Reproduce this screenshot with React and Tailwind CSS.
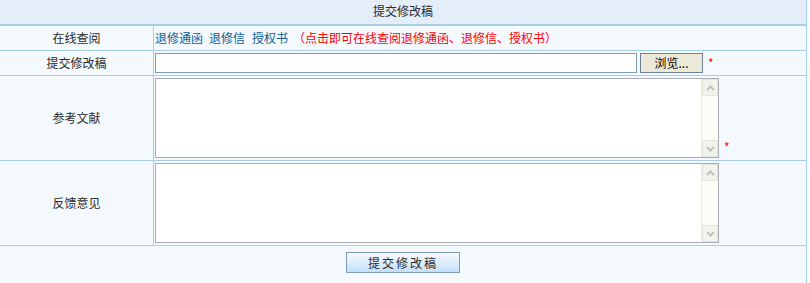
import React from "react";

function FakeTextarea() {
  return (
    <div className="flex w-[564px] h-[80px] border border-[#a9adb3] bg-white">
      <textarea className="flex-1 resize-none outline-none border-0 bg-white" />
      <div className="flex flex-col w-[17px] bg-[#fcfcf8] border-l border-[#f0efe8]">
        <div className="flex items-center justify-center h-[17px] bg-[#f3f2ec] border border-[#e6e4dc]">
          <svg width="9" height="6" viewBox="0 0 9 6">
            <path d="M1 5 L4.5 1.5 L8 5" fill="none" stroke="#c2c2bd" strokeWidth="2" />
          </svg>
        </div>
        <div className="flex-1" />
        <div className="flex items-center justify-center h-[17px] bg-[#f3f2ec] border border-[#e6e4dc]">
          <svg width="9" height="6" viewBox="0 0 9 6">
            <path d="M1 1 L4.5 4.5 L8 1" fill="none" stroke="#c2c2bd" strokeWidth="2" />
          </svg>
        </div>
      </div>
    </div>
  );
}

function Row({ label, height, children, alignEnd }) {
  return (
    <div className={"flex border-b border-[#a8cde6] " + height}>
      <div className="flex w-[154px] shrink-0 items-center justify-center border-r border-[#a8cde6] text-[#2b2b2b]">
        {label}
      </div>
      <div className={"flex flex-1 pl-[1px] " + (alignEnd ? "items-start pt-[2px]" : "items-center")}>
        {children}
      </div>
    </div>
  );
}

export default function App() {
  return (
    <div className="w-[810px] h-[283px] bg-white font-['Noto_Sans_CJK_SC',sans-serif] text-[12px] leading-[16px]">
      <div className="w-[807px] border-r border-[#a8cde6] bg-[#f4f9fe] h-[283px]">
        <div className="flex h-[26px] items-center justify-center bg-[#e3eef9] border-b-2 border-[#a8cde6] text-[#2b2b2b] pb-[2px]">
          提交修改稿
        </div>
        <Row label="在线查阅" height="h-[25px]">
          <a className="text-[#0f5c94] mr-[6px]" href="#">退修通函</a>
          <a className="text-[#0f5c94] mr-[7px]" href="#">退修信</a>
          <a className="text-[#0f5c94] mr-[5px]" href="#">授权书</a>
          <span className="text-[#ff0000]">（点击即可在线查阅退修通函、退修信、授权书）</span>
        </Row>
        <Row label="提交修改稿" height="h-[25px]">
          <input type="text" className="w-[482px] h-[20px] border border-[#7f9db9] bg-white outline-none" />
          <button className="ml-[3px] w-[63px] h-[20px] border border-[#6d8299] bg-[#ece9d8] text-black leading-[18px]">
            浏览...
          </button>
          <span className="ml-[5px] text-[#ff0000]">*</span>
        </Row>
        <Row label="参考文献" height="h-[85px]" alignEnd>
          <div className="flex items-end">
            <FakeTextarea />
            <span className="ml-[5px] mb-[5px] text-[#ff0000] leading-[12px]">*</span>
          </div>
        </Row>
        <Row label="反馈意见" height="h-[85px]" alignEnd>
          <FakeTextarea />
        </Row>
        <div className="flex justify-center pt-[6px]">
          <button className="w-[114px] h-[21px] border border-[#7f9db9] bg-gradient-to-b from-[#f8fbff] to-[#c2dff9] text-[#2b2b2b] tracking-[2px] leading-[19px]">
            提交修改稿
          </button>
        </div>
      </div>
    </div>
  );
}
